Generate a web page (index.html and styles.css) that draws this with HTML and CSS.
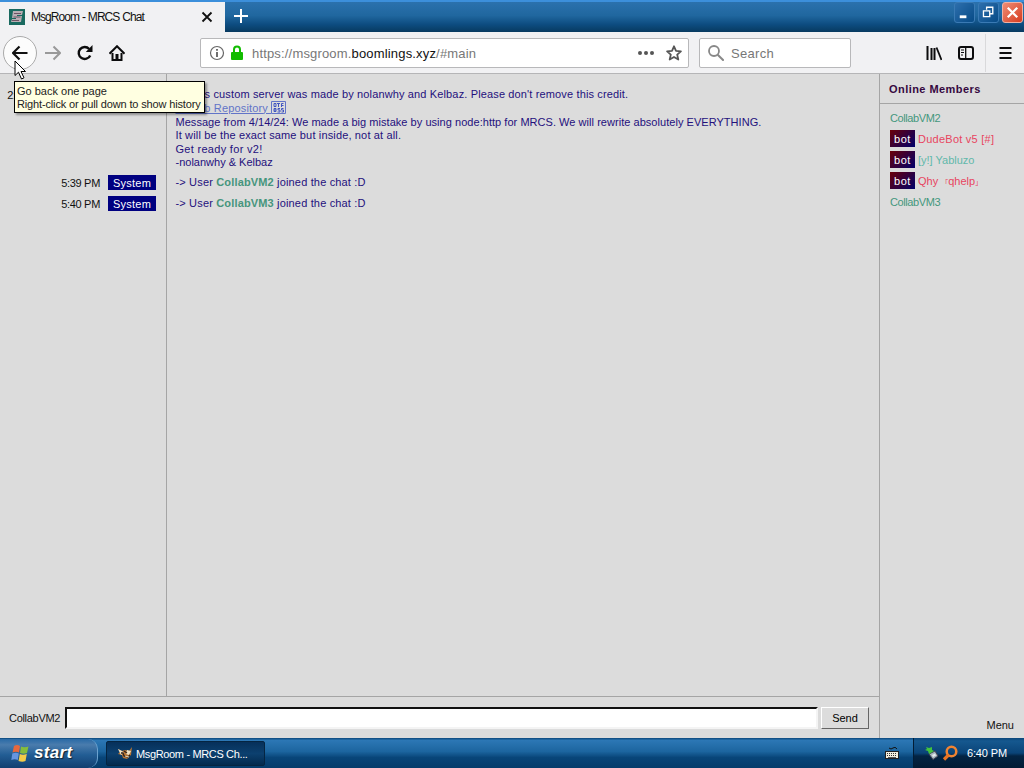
FILE: index.html
```html
<!DOCTYPE html>
<html lang="en">
<head>
    <meta charset="UTF-8">
    <meta name="viewport" content="width=device-width, initial-scale=1.0">
    <title>MsgRoom - MRCS Chat</title>
    <link rel="stylesheet" href="styles.css">
</head>
<body>
    <div class="titlebar">
      <div class="tab">
        <svg class="favicon" viewBox="0 0 16 16">
          <rect width="16" height="16" fill="#19695f"/>
          <path d="M4 2h10l-1 4H8v1h5l-1 6H2l1-3h4V9H3z" fill="#b9aeb4"/>
          <path d="M5 4.500h7M4.500 8h7M3 11.500h7" stroke="#6c5262" fill="none"/>
        </svg>
        <span class="tab-title">MsgRoom - MRCS Chat</span>
        <svg class="tab-close" viewBox="0 0 12 12"><path d="M1.500 1.500l9 9M10.500 1.500l-9 9" stroke="#111" stroke-width="1.800"/></svg>
      </div>
      <svg class="new-tab" viewBox="0 0 16 16"><path d="M8 1v14M1 8h14" stroke="#fff" stroke-width="2"/></svg>
      <div class="window-buttons">
        <span class="win-button"><svg viewBox="0 0 20 20"><path d="M5 14.500h7" stroke="#fff" stroke-width="3"/></svg></span>
        <span class="win-button"><svg viewBox="0 0 20 20"><path d="M4.700 8.200h6.600v6.100H4.700zM8 7V4.500h6.500v6.800h-2.500" fill="none" stroke="#fff" stroke-width="1.400"/></svg></span>
        <span class="win-button close"><svg viewBox="0 0 20 20"><path d="M5 5l10 10M15 5L5 15" stroke="#fff" stroke-width="2.400"/></svg></span>
      </div>
    </div>

    <div class="toolbar">
      <div class="nav-icons">
        <span class="back"><svg viewBox="0 0 16 16"><path d="M15.500 8H1.500M7.500 1.500L1 8l6.500 6.500" fill="none" stroke="#111" stroke-width="2.200"/></svg></span>
        <svg class="icon" viewBox="0 0 16 16"><path d="M0 8h14M8.500 1.500L15 8l-6.500 6.500" fill="none" stroke="#999" stroke-width="2"/></svg>
        <svg class="icon" viewBox="0 0 16 16"><path d="M13.200 10.400A6 6 0 1 1 12.200 4" fill="none" stroke="#0c0c0d" stroke-width="2.400"/><path d="M15.500 0v7H8.800z" fill="#0c0c0d"/></svg>
        <svg class="icon" viewBox="0 0 16 16"><path d="M.5 8.700L8 1.200l7.500 7.500" fill="none" stroke="#0c0c0d" stroke-width="2"/><path d="M3.500 8v7h9V8" fill="none" stroke="#0c0c0d" stroke-width="2"/><path d="M6.500 9h3v6h-3z" fill="#0c0c0d"/></svg>
      </div>
      <div class="url-bar">
        <svg class="info" viewBox="0 0 16 16"><circle cx="8" cy="8" r="6.500" fill="none" stroke="#666" stroke-width="1.200"/><path d="M8 7v5M8 4v1.800" stroke="#555" stroke-width="1.700"/></svg>
        <svg class="lock" viewBox="0 0 14 16"><path d="M4 8V4.500a3 3 0 0 1 6 0V8" fill="none" stroke="#12bc00" stroke-width="2"/><rect x="1" y="7" width="12" height="8" rx="1" fill="#12bc00"/></svg>
        <span class="url">https://msgroom.<b>boomlings.xyz</b>/#main</span>
        <svg class="dots" viewBox="0 0 16 4"><circle cx="2" cy="2" r="2"/><circle cx="8" cy="2" r="2"/><circle cx="14" cy="2" r="2"/></svg>
        <svg class="icon star" viewBox="0 0 16 16"><path d="M8 1.300l2 4.500 4.900.5-3.700 3.300 1.100 4.900L8 12l-4.300 2.500 1.100-4.900L1.100 6.300l4.900-.5z" fill="none" stroke="#555" stroke-width="1.800" stroke-linejoin="round"/></svg>
      </div>
      <div class="search-bar">
        <svg class="icon" viewBox="0 0 16 16"><circle cx="6" cy="6" r="5" fill="none" stroke="#888" stroke-width="1.800"/><path d="M9.700 9.700l6 6" stroke="#888" stroke-width="2"/></svg>
        <span>Search</span>
      </div>
      <div class="tool-icons">
        <svg class="icon" viewBox="0 0 16 16"><path d="M1.500 1v14M5.500 3v12M8.500 3v12" stroke="#0c0c0d" stroke-width="2"/><path d="M10.500 2.500L15.500 15" stroke="#0c0c0d" stroke-width="1.800"/></svg>
        <svg class="icon" viewBox="0 0 16 16"><rect x="1" y="2" width="14" height="12" rx="2" fill="none" stroke="#0c0c0d" stroke-width="2"/><path d="M7.700 2v12" stroke="#0c0c0d" stroke-width="1.300"/><path d="M3 5h3M3 7.500h3M3 10h2" stroke="#0c0c0d"/></svg>
      </div>
      <div class="hamburger">
        <svg viewBox="0 0 12 12"><path d="M0 1h12M0 6h12M0 11h12" stroke="#0c0c0d" stroke-width="1.800"/></svg>
      </div>
    </div>

    <div class="app">
      <div class="chat">
        <div class="messages">
          <div class="message first">
            <div class="meta"><span class="time">2:03 PM</span> <span class="tag">System</span></div>
            <div class="content">
              <div class="line credit">-&gt; This custom server was made by nolanwhy and Kelbaz. Please don't remove this credit.</div>
              <div class="line repo"><a href="#main">GitHub Repository <svg viewBox="0 0 15 13"><path d="M.5.500h14v12H.5z" fill="none" stroke="#6274c8"/><path d="M3 2.500h2v3H3zM6 2.500h3M7.500 2v4M10.500 6V2.500h2M10.500 4.500h2M3 7.500h2v3H3zM3 9h2M9 7.500H7V9h2v2H6.500M12.500 7.500h-2V9h2v2h-2" fill="none" stroke="#4055c0"/></svg></a></div>
              <div class="line long">Message from 4/14/24: We made a big mistake by using node:http for MRCS. We will rewrite absolutely EVERYTHING.</div>
              <div class="line inside">It will be the exact same but inside, not at all.</div>
              <div class="line ready">Get ready for v2!</div>
              <div class="line sign">-nolanwhy &amp; Kelbaz</div>
            </div>
          </div>
          <div class="message">
            <div class="meta"><span class="time">5:39 PM</span> <span class="tag">System</span></div>
            <div class="content joined">-&gt; User <b>CollabVM2</b> joined the chat :D</div>
          </div>
          <div class="message">
            <div class="meta"><span class="time">5:40 PM</span> <span class="tag">System</span></div>
            <div class="content joined">-&gt; User <b>CollabVM3</b> joined the chat :D</div>
          </div>
          <div class="message filler">
            <div class="meta"></div>
            <div class="content"></div>
          </div>
        </div>
        <div class="composer">
          <span class="nick">CollabVM2</span>
          <input class="text-input" type="text">
          <button class="send">Send</button>
        </div>
      </div>
      <div class="members">
        <h2>Online Members</h2>
        <ul>
          <li class="green">CollabVM2</li>
          <li class="red"><i>bot</i><span class="dude">DudeBot v5 [#]</span></li>
          <li class="teal"><i>bot</i><span>[y!] Yabluzo</span></li>
          <li class="red"><i>bot</i><span>Qhy <em>「</em>qhelp<em>」</em></span></li>
          <li class="green">CollabVM3</li>
        </ul>
        <span class="menu">Menu</span>
      </div>
    </div>

    <div class="taskbar">
      <div class="start">
        <svg viewBox="0 0 18 18"><path d="M3 2q3-2 6 0L8 8.500Q5 7 1.500 8.500z" fill="#e8683c"/><path d="M10 2.500q3 1.500 7.500 0L16 9q-3 1.500-7 0z" fill="#85bd3c"/><path d="M1.300 9.500Q5 8 7.800 9.500l-1 6.500q-3-1.500-6.500 0z" fill="#6795df"/><path d="M8.800 10q3 1.500 7 0L14.500 17q-3 1.500-7 0z" fill="#f4cb48"/></svg>
        <span>start</span>
      </div>
      <div class="task">
        <svg viewBox="0 0 16 14"><path d="M1 3l4 2 3-1 4 1 3-4-1 8-4 4-4-1-1-3-4-1 2-2z" fill="#b87532"/><path d="M1 3l4 2 2 2-3 2zM10 4l4 1-2 4-3-1z" fill="#eee2c5"/><path d="M4 7h2l1 3 4 1 2-2M7 5l3 2" stroke="#30211a" stroke-width="1.300" fill="none"/><path d="M8 10l4 1" stroke="#eee2c5"/></svg>
        <span>MsgRoom - MRCS Ch...</span>
      </div>
      <svg class="keyboard" viewBox="0 0 14 12"><path d="M4 1q2 2 4 0t4 1" fill="none" stroke="#111"/><rect x=".5" y="4.500" width="13" height="7" fill="#f3efdf" stroke="#222"/><path d="M2 6.500h10M2 8.500h10" stroke="#333" stroke-dasharray="1 1"/><path d="M3 10.500h8" stroke="#555"/></svg>
      <div class="tray">
        <svg class="usb" viewBox="0 0 14 14"><path d="M4 8l6-3 3 5-5 3.500z" fill="#a5b5bd" stroke="#445"/><path d="M7 9l3-1.500 1 2-3 1.500z" fill="#e8edf0"/><path d="M1 1l3 1 3-1v3l2 1-5 3-1-3-3-1 2-1z" fill="#42c43d"/></svg>
        <svg class="finder" viewBox="0 0 16 16"><circle cx="9.500" cy="6.500" r="4.800" fill="none" stroke="#f08432" stroke-width="2.500"/><path d="M6.500 10L2 14.500" stroke="#e77424" stroke-width="3.200"/></svg>
        <span>6:40 PM</span>
      </div>
    </div>

    <div class="tooltip">
      <div>Go back one page</div>
      <div class="wide">Right-click or pull down to show history</div>
    </div>
    <svg class="cursor" viewBox="0 0 12 20"><path d="M1 1v14.500l3.500-3.300L7.500 19l2.500-1.200-3-6.300h4.500z" fill="#fff" stroke="#000"/></svg>
</body>
</html>
```
FILE: styles.css
```css
* {
  box-sizing: border-box;
}

body {
  margin: 0;
  width: 1024px;
  height: 768px;
  overflow: hidden;
  display: flex;
  flex-direction: column;
  font-family: "Liberation Sans", sans-serif;
  font-size: 11px;
  color: #111;
  background: #dcdcdc;
}

svg {
  display: block;
  flex: none;
}

.icon {
  width: 16px;
  height: 16px;
}

/* Browser window */
.titlebar {
  height: 32px;
  flex: none;
  display: flex;
  border-top: 2px solid #3c8fdb;
  background: linear-gradient(#2b71ad, #20679f 45%, #0d4c80 75%, #073a60);
}

.tab {
  width: 225px;
  height: 32px;
  padding: 0 12px 2px 9px;
  display: flex;
  align-items: center;
  background: #f1f1f3;
}

.favicon {
  width: 16px;
  height: 16px;
}

.tab-title {
  flex: 1;
  padding-left: 6px;
  font-size: 12px;
  letter-spacing: -0.95px;
  word-spacing: 0.5px;
}

.tab-close {
  width: 12px;
  height: 12px;
}

.new-tab {
  width: 16px;
  height: 16px;
  margin: 6px 0 0 8px;
}

.window-buttons {
  margin-left: auto;
  padding-right: 1px;
  display: flex;
  gap: 3px;
}

.win-button {
  width: 21px;
  height: 21px;
  border: 1px solid #3a7ab4;
  border-radius: 3px;
  background: linear-gradient(135deg, #2d6fad, #074b87);
}

.win-button svg {
  width: 19px;
  height: 19px;
}

.win-button.close {
  border-color: #efb1a4;
  background: linear-gradient(135deg, #ee8d75, #d73c20);
}

.toolbar {
  height: 42px;
  flex: none;
  display: flex;
  align-items: center;
  border-bottom: 1px solid #b5b5b7;
  background: #f1f1f3;
}

.nav-icons {
  width: 200px;
  padding-left: 3px;
  display: flex;
  align-items: center;
  gap: 16px;
}

.back {
  width: 34px;
  height: 34px;
  margin-right: -8px;
  display: flex;
  align-items: center;
  justify-content: center;
  border: 1px solid #aaa;
  border-radius: 50%;
  background: #fcfcfc;
}

.back svg {
  width: 16px;
  height: 16px;
}

.url-bar,
.search-bar {
  height: 30px;
  display: flex;
  align-items: center;
  border: 1px solid #b8b8ba;
  border-radius: 2px;
  background: #fff;
  color: #777;
  font-size: 13px;
}

.url-bar {
  width: 489px;
  padding: 0 6px 0 8px;
}

.info {
  width: 16px;
  height: 16px;
}

.lock {
  width: 14px;
  height: 16px;
  margin: 0 8px 0 5px;
}

.url {
  flex: 1;
  padding-top: 1px;
  letter-spacing: 0.17px;
}

.url b {
  font-weight: normal;
  color: #111;
}

.dots {
  width: 16px;
  height: 4px;
  margin-right: 12px;
  fill: #555;
}

.search-bar {
  width: 152px;
  margin-left: 10px;
  padding-left: 8px;
  gap: 7px;
  letter-spacing: 0.3px;
}

.search-bar span {
  padding-top: 1px;
}

.tool-icons {
  width: 134px;
  height: 100%;
  padding-left: 75px;
  display: flex;
  align-items: center;
  gap: 16px;
}

.hamburger {
  flex: 1;
  height: 38px;
  padding-left: 13px;
  display: flex;
  align-items: center;
  border-left: 1px solid #d9d9db;
}

.hamburger svg {
  width: 13px;
  height: 12px;
}

/* Chat page */
.app {
  flex: 1;
  min-height: 0;
  display: flex;
}

.chat {
  width: 880px;
  display: flex;
  flex-direction: column;
  border-right: 1px solid #a5a5a5;
}

.messages {
  flex: 1;
  display: flex;
  flex-direction: column;
  border-bottom: 1px solid #a5a5a5;
}

.message {
  display: flex;
  height: 21px;
}

.message.first {
  height: 99px;
}

.message.filler {
  flex: 1;
}

.meta {
  width: 167px;
  padding-right: 10px;
  display: flex;
  align-items: flex-start;
  justify-content: flex-end;
  gap: 8px;
  border-right: 1px solid #a5a5a5;
}

.first .meta {
  padding-top: 14px;
  padding-right: 64px;
}

.time {
  padding-top: 4px;
  letter-spacing: -0.3px;
}

.first .time {
  padding-top: 1px;
}

.tag {
  width: 48px;
  height: 15px;
  margin-top: 2px;
  line-height: 16px;
  text-align: center;
  background: #000080;
  color: #fff;
  letter-spacing: 0.25px;
}

.content {
  padding: 3px 0 0 8.5px;
  color: #24107c;
  white-space: nowrap;
}

.first .content {
  padding-top: 13px;
}

.line {
  height: 13.5px;
  line-height: 14px;
}

.line.repo {
  height: 14px;
  letter-spacing: 0.15px;
}

.line.credit {
  letter-spacing: 0.14px;
}

.line.long {
  letter-spacing: 0.04px;
}

.line.inside {
  letter-spacing: 0.15px;
}

.line.ready {
  letter-spacing: 0.3px;
}

.line a {
  color: #6274c8;
}

.line a svg {
  width: 15px;
  height: 13px;
  display: inline-block;
  vertical-align: -2px;
}

.joined {
  letter-spacing: 0.16px;
}

.joined b {
  color: #46957c;
}

.composer {
  height: 41px;
  padding: 0 10px 0 9px;
  display: flex;
  align-items: center;
}

.nick {
  width: 56px;
  letter-spacing: -0.3px;
}

.text-input {
  width: 753px;
  height: 22px;
  border: 2px solid #f4f4f4;
  border-top-color: #111;
  border-left-color: #111;
  background: #fff;
}

.send {
  width: 48px;
  height: 22px;
  margin-left: 3px;
  padding: 0;
  font: inherit;
  border: 1px solid #666;
  border-top-color: #fff;
  border-left-color: #fff;
  background: #dcdcdc;
}

.members {
  flex: 1;
  display: flex;
  flex-direction: column;
}

.members h2 {
  height: 30px;
  margin: 0;
  padding-left: 9px;
  line-height: 31px;
  font-size: 11px;
  letter-spacing: 0.45px;
  color: #35083f;
  border-bottom: 1px solid #a5a5a5;
}

.members ul {
  flex: 1;
  margin: 0;
  padding: 3px 0 0 10px;
  list-style: none;
}

.members li {
  height: 21px;
  display: flex;
  align-items: center;
  gap: 3px;
}

.members i {
  width: 25px;
  height: 17px;
  line-height: 18px;
  text-align: center;
  font-style: normal;
  letter-spacing: 0.5px;
  color: #fff;
  background: linear-gradient(135deg, #6b0008, #00006b);
}

.members em {
  font-family: "Noto Sans CJK JP", sans-serif;
  font-style: normal;
  font-size: 7px;
  line-height: 1;
}

.members .green {
  color: #44977d;
  letter-spacing: -0.4px;
}

.dude {
  letter-spacing: 0.25px;
}

.red {
  color: #e84460;
}

.teal {
  color: #61b8aa;
}

.menu {
  align-self: flex-end;
  padding: 0 10px 7px 0;
}

/* Desktop */
.taskbar {
  height: 30px;
  flex: none;
  display: flex;
  align-items: center;
  color: #fff;
  background: linear-gradient(#0b467a, #2c77b5 8%, #1c659f 45%, #084579 65%, #053c6b);
}

.start {
  width: 98px;
  height: 29px;
  padding-left: 11px;
  display: flex;
  align-items: center;
  gap: 5px;
  border-right: 1px solid #6ba2cf;
  border-radius: 0 10px 10px 0;
  background: linear-gradient(#296aa6, #4a7cad 20%, #225d94 55%, #123f70);
}

.start svg {
  width: 18px;
  height: 18px;
}

.start span {
  font-size: 17px;
  font-weight: bold;
  font-style: italic;
  letter-spacing: 0.3px;
  text-shadow: 1px 1px 1px #123;
}

.task {
  width: 159px;
  height: 25px;
  margin-left: 8px;
  padding-left: 10px;
  display: flex;
  align-items: center;
  gap: 3px;
  border: 1px solid #052542;
  border-radius: 2px;
  background: linear-gradient(#06305a, #0c406f 50%, #032a4e);
}

.task svg {
  width: 16px;
  height: 14px;
}

.task span {
  padding-top: 2px;
  letter-spacing: -0.35px;
}

.keyboard {
  width: 14px;
  height: 12px;
  margin-left: auto;
  margin-right: 14px;
}

.tray {
  width: 111px;
  height: 30px;
  padding-left: 11px;
  display: flex;
  align-items: center;
  border-left: 1px solid #031d35;
  background: linear-gradient(#0b467a, #15588f 10%, #0a4478 50%, #032443 60%, #021b34);
}

.usb {
  width: 14px;
  height: 14px;
}

.finder {
  width: 16px;
  height: 16px;
  margin: 0 9px 0 3px;
}

.tray span {
  letter-spacing: -0.15px;
}

/* Overlays */
.tooltip {
  position: absolute;
  left: 14px;
  top: 81px;
  width: 191px;
  height: 32px;
  padding: 3px 0 0 2px;
  line-height: 13px;
  white-space: nowrap;
  color: #222;
  border: 1px solid #000;
  background: #ffffe1;
  box-shadow: 2px 2px 2px rgba(0,0,0,0.35);
}

.tooltip .wide {
  letter-spacing: -0.15px;
}

.cursor {
  position: absolute;
  left: 14px;
  top: 60px;
  width: 12px;
  height: 20px;
}
```
